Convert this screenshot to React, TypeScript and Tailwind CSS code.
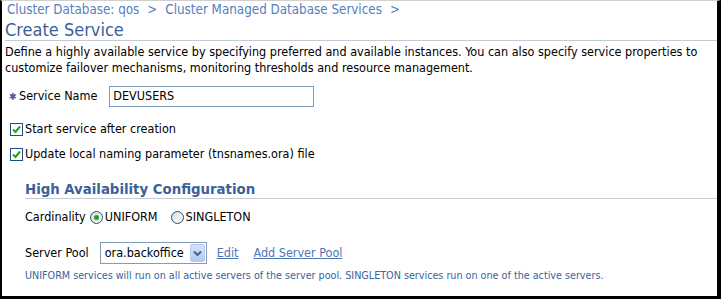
import React from "react";

const font = { fontFamily: '"DejaVu Sans Condensed", "DejaVu Sans", "Liberation Sans", sans-serif' };

function Check() {
  return (
    <span className="inline-flex h-[13px] w-[13px] shrink-0 items-center justify-center border border-[#1c5180] bg-white">
      <svg width="9" height="9" viewBox="0 0 9 9">
        <path d="M1 4.5 L3.5 7 L8 1.5" fill="none" stroke="#21a121" strokeWidth="2" />
      </svg>
    </span>
  );
}

function Radio({ on }: { on?: boolean }) {
  return (
    <span className="inline-flex h-[13px] w-[13px] shrink-0 items-center justify-center rounded-full border border-[#1c5180] bg-gradient-to-br from-[#dcdcd6] to-white">
      {on && <span className="h-[5px] w-[5px] rounded-full bg-[#21a121]" />}
    </span>
  );
}

export default function App() {
  return (
    <div
      className="box-border h-[299px] w-[721px] overflow-hidden border-t border-l-2 border-r-4 border-b-[3px] border-t-[#d0d0d0] border-l-black border-r-black border-b-black bg-white text-[12.5px] text-black"
      style={font}
    >
      <div className="flex h-[17px] items-center gap-[8px] pl-[5px] text-[13.3px] text-[#5580bd]">
        <span>Cluster Database: qos</span>
        <span>&gt;</span>
        <span>Cluster Managed Database Services</span>
        <span>&gt;</span>
      </div>
      <div className="ml-[3px] mt-[1px] flex h-[22px] items-center border-b border-[#c4cad4] text-[18px] leading-none text-[#3a6198]">
        Create Service
      </div>
      <div className="ml-[3px] mt-[3px] whitespace-nowrap leading-[16px]">
        Define a highly available service by specifying preferred and available instances. You can also specify service properties to
        <br />
        customize failover mechanisms, monitoring thresholds and resource management.
      </div>
      <div className="ml-[7px] mt-[10px] flex h-[21px] items-center">
        <span className="w-[10px] text-[10px] text-[#3a6198]">✱</span>
        <span>Service Name</span>
        <div className="ml-[12px] flex h-[21px] w-[205px] items-center border border-[#7f9db9] px-[3px]">DEVUSERS</div>
      </div>
      <div className="ml-[8px] mt-[15px] flex h-[14px] items-center gap-[2px]">
        <Check />
        <span>Start service after creation</span>
      </div>
      <div className="ml-[8px] mt-[11px] flex h-[14px] items-center gap-[2px]">
        <Check />
        <span>Update local naming parameter (tnsnames.ora) file</span>
      </div>
      <div className="ml-[23px] mt-[19px] flex h-[19px] items-end border-b border-[#c4cad4] pb-[1px] text-[14.8px] font-bold leading-none text-[#3a6198]">
        High Availability Configuration
      </div>
      <div className="ml-[23px] mt-[10px] flex h-[16px] items-center">
        <span>Cardinality</span>
        <span className="ml-[4px] flex items-center gap-[2px]">
          <Radio on />
          <span>UNIFORM</span>
        </span>
        <span className="ml-[13px] flex items-center gap-[2px]">
          <Radio />
          <span>SINGLETON</span>
        </span>
      </div>
      <div className="ml-[23px] mt-[17px] flex h-[22px] items-center">
        <span>Server Pool</span>
        <div className="ml-[11px] flex h-[22px] w-[107px] items-center justify-between border border-[#7f9db9] pl-[4px] pr-[1px]">
          <span className="whitespace-nowrap">ora.backoffice</span>
          <span className="flex h-[18px] w-[15px] shrink-0 items-center justify-center rounded-[2px] border border-[#b9c9ef] bg-gradient-to-b from-[#d6e1fc] to-[#b3c8f5]">
            <svg width="9" height="7" viewBox="0 0 9 7">
              <path d="M1 1.5 L4.5 5 L8 1.5" fill="none" stroke="#4d6185" strokeWidth="2" />
            </svg>
          </span>
        </div>
        <a className="ml-[10px] text-[#4a78b8] underline">Edit</a>
        <a className="ml-[15px] text-[#4a78b8] underline">Add Server Pool</a>
      </div>
      <div className="ml-[23px] mt-[5px] whitespace-nowrap text-[10.7px] leading-[14px] text-[#36649f]">
        UNIFORM services will run on all active servers of the server pool. SINGLETON services run on one of the active servers.
      </div>
    </div>
  );
}
